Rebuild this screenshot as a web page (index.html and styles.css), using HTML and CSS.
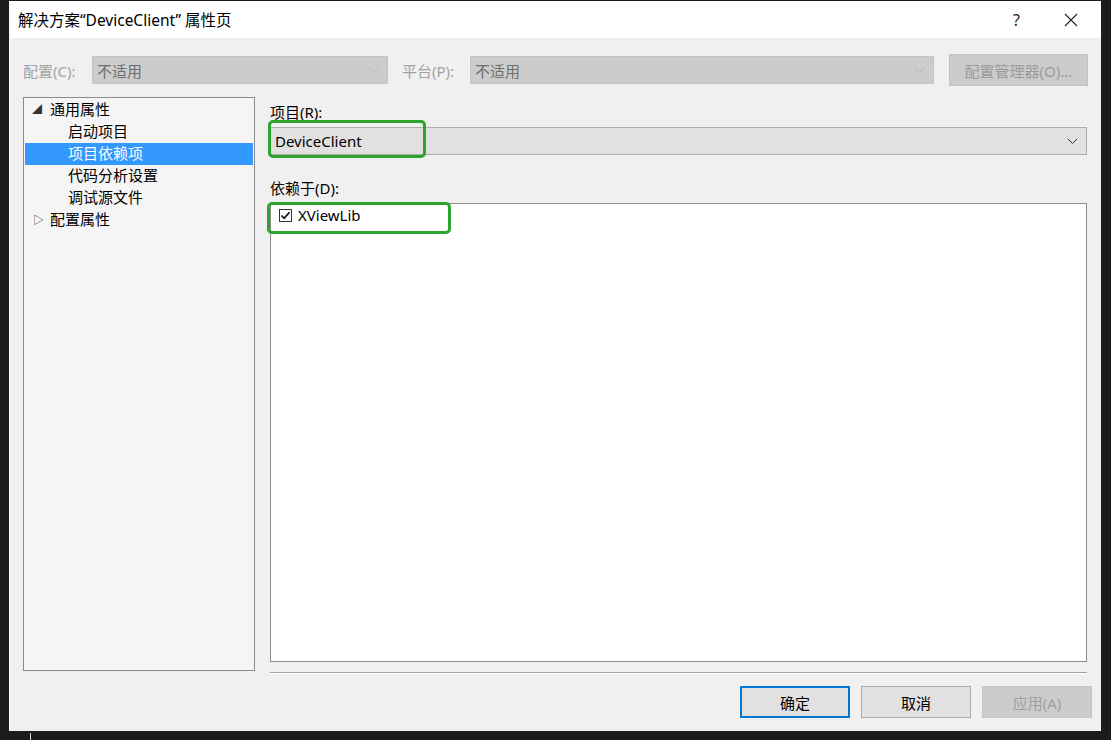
FILE: index.html
```html
<!DOCTYPE html>
<html>
<head>
  <meta charset="utf-8">
  <link rel="stylesheet" href="styles.css">
</head>
<body>
  <div class="dialog">
    <div class="titlebar">
      <span class="title">解决方案“DeviceClient” 属性页</span>
      <div class="title-buttons">
        <span class="help">?</span>
        <svg class="close" width="14" height="14" viewBox="0 0 14 14">
          <path d="M1 1 L13 13 M13 1 L1 13" stroke="#222" stroke-width="1.1" fill="none"/>
        </svg>
      </div>
    </div>

    <div class="content">
      <div class="config-row">
        <span class="dim-label">配置(C):</span>
        <div class="combo combo-disabled combo-config">
          <span>不适用</span>
          <svg class="chevron" width="11" height="7" viewBox="0 0 11 7"><path d="M1 1 L5.5 5.5 L10 1" stroke="#b4b4b4" fill="none"/></svg>
        </div>
        <span class="dim-label platform-label">平台(P):</span>
        <div class="combo combo-disabled combo-platform">
          <span>不适用</span>
          <svg class="chevron" width="11" height="7" viewBox="0 0 11 7"><path d="M1 1 L5.5 5.5 L10 1" stroke="#b4b4b4" fill="none"/></svg>
        </div>
        <button class="btn btn-manager">配置管理器(O)...</button>
      </div>

      <div class="main">
        <div class="tree">
          <div class="tree-item"><span class="twisty">&#9698;</span>通用属性</div>
          <div class="tree-item child">启动项目</div>
          <div class="tree-item child selected">项目依赖项</div>
          <div class="tree-item child">代码分析设置</div>
          <div class="tree-item child">调试源文件</div>
          <div class="tree-item"><span class="twisty open">&#9655;</span>配置属性</div>
        </div>

        <div class="pane">
          <div class="field-label">项目(R):</div>
          <div class="combo combo-project">
            <span>DeviceClient</span>
            <svg class="chevron" width="11" height="7" viewBox="0 0 11 7"><path d="M1 1 L5.5 5.5 L10 1" stroke="#333" fill="none"/></svg>
            <div class="mark mark-project"></div>
          </div>

          <div class="field-label deps-label">依赖于(D):</div>
          <div class="listbox">
            <div class="list-item">
              <span class="checkbox">
                <svg width="11" height="11" viewBox="0 0 11 11"><path d="M1.5 5.5 L4.2 8.3 L9.5 2.2" stroke="#111" stroke-width="1.7" fill="none"/></svg>
              </span>
              XViewLib
            </div>
            <div class="mark mark-list"></div>
          </div>

          <div class="separator"></div>
        </div>
      </div>

      <div class="button-row">
        <button class="btn btn-default">确定</button>
        <button class="btn">取消</button>
        <button class="btn btn-disabled">应用(A)</button>
      </div>
    </div>
  </div>
  <div class="cursor"></div>
</body>
</html>
```

FILE: styles.css
```css
html, body {
  margin: 0;
  height: 100%;
}

body {
  background: #1c1c1c;
  padding: 1px 10px 0 9px;
  box-sizing: border-box;
  font-family: "Noto Sans", "Noto Sans CJK SC", sans-serif;
  font-size: 15px;
  color: #000;
  position: relative;
}

.dialog {
  width: 1092px;
  height: 730px;
  background: #f0f0f0;
  display: flex;
  flex-direction: column;
  border-left: 1px solid #f7f7f7;
  box-sizing: border-box;
}

.titlebar {
  height: 37px;
  background: #fff;
  display: flex;
  align-items: center;
  justify-content: space-between;
  padding: 0 23px 0 8px;
  flex-shrink: 0;
}

.title {
  font-size: 15.5px;
  color: #000;
  padding-bottom: 1px;
}

.title-buttons {
  display: flex;
  align-items: center;
  gap: 44px;
}

.help {
  font-size: 16px;
  color: #222;
}

.content {
  flex: 1;
  display: flex;
  flex-direction: column;
  padding: 0 9px 0 13px;
}

.config-row {
  display: flex;
  align-items: center;
  height: 32px;
  margin-top: 16px;
}

.dim-label {
  color: #a3a3a3;
  width: 69px;
  flex-shrink: 0;
}

.platform-label {
  margin-left: 14px;
  width: 68px;
}

.combo {
  position: relative;
  height: 28px;
  display: flex;
  align-items: center;
  justify-content: space-between;
  padding: 0 8px 0 4px;
  box-sizing: border-box;
}

.combo-disabled {
  background: #cccccc;
  color: #6e6e6e;
  border: 1px solid #c4c4c4;
}

.combo-config {
  width: 296px;
}

.combo-platform {
  width: 464px;
}

.btn {
  width: 110px;
  height: 32px;
  background: #e1e1e1;
  border: 1px solid #adadad;
  font-family: inherit;
  font-size: 15px;
  color: #000;
  padding: 0;
}

.btn-manager {
  width: 139px;
  margin-left: 15px;
  background: #cccccc;
  border-color: #c2c2c2;
  color: #9a9a9a;
}

.main {
  display: flex;
  gap: 15px;
  margin-top: 11px;
}

.tree {
  width: 232px;
  height: 574px;
  box-sizing: border-box;
  background: #f5f5f5;
  border: 1px solid #8c8c8c;
  padding: 1px 1px;
}

.tree-item {
  height: 22px;
  line-height: 21px;
  padding-left: 25px;
  position: relative;
  white-space: nowrap;
}

.tree-item.child {
  padding-left: 43px;
}

.tree-item.selected {
  background: #3399ff;
  color: #fff;
}

.twisty {
  position: absolute;
  left: 7px;
  top: 0;
  font-size: 10px;
  color: #333;
}

.twisty.open {
  left: 8px;
  font-size: 11px;
  color: #444;
}

.pane {
  flex: 1;
  display: flex;
  flex-direction: column;
}

.field-label {
  margin-top: 4px;
  height: 22px;
  line-height: 22px;
}

.combo-project {
  width: 817px;
  margin-top: 4px;
  background: #e1e1e1;
  border: 1px solid #adadad;
  padding-left: 4px;
}

.deps-label {
  margin-top: 22px;
}

.listbox {
  position: relative;
  height: 459px;
  margin-top: 4px;
  width: 817px;
  box-sizing: border-box;
  background: #fff;
  border: 1px solid #8c8c8c;
}

.list-item {
  display: flex;
  align-items: center;
  height: 22px;
  padding-left: 8px;
  margin-top: 0;
}

.checkbox {
  width: 13px;
  height: 13px;
  box-sizing: border-box;
  border: 1px solid #333;
  background: #fff;
  display: flex;
  align-items: center;
  justify-content: center;
  margin-right: 6px;
}

.mark {
  position: absolute;
  border: 3px solid #2ba52b;
  border-radius: 5px;
  box-sizing: border-box;
}

.mark-project {
  left: -3px;
  top: -8px;
  width: 158px;
  height: 38px;
}

.mark-list {
  left: -4px;
  top: -2px;
  width: 184px;
  height: 32px;
}

.separator {
  margin-top: 10px;
  width: 817px;
  border-top: 1px solid #a0a0a0;
  border-bottom: 1px solid #fff;
}

.button-row {
  display: flex;
  justify-content: flex-end;
  gap: 11px;
  margin-top: 12px;
}

.btn-default {
  border: 2px solid #0078d7;
}

.btn-disabled {
  background: #cccccc;
  border-color: #c4c4c4;
  color: #a0a0a0;
}

.cursor {
  position: absolute;
  left: 30px;
  top: 733px;
  width: 1px;
  height: 7px;
  background: #ddd;
}
```
